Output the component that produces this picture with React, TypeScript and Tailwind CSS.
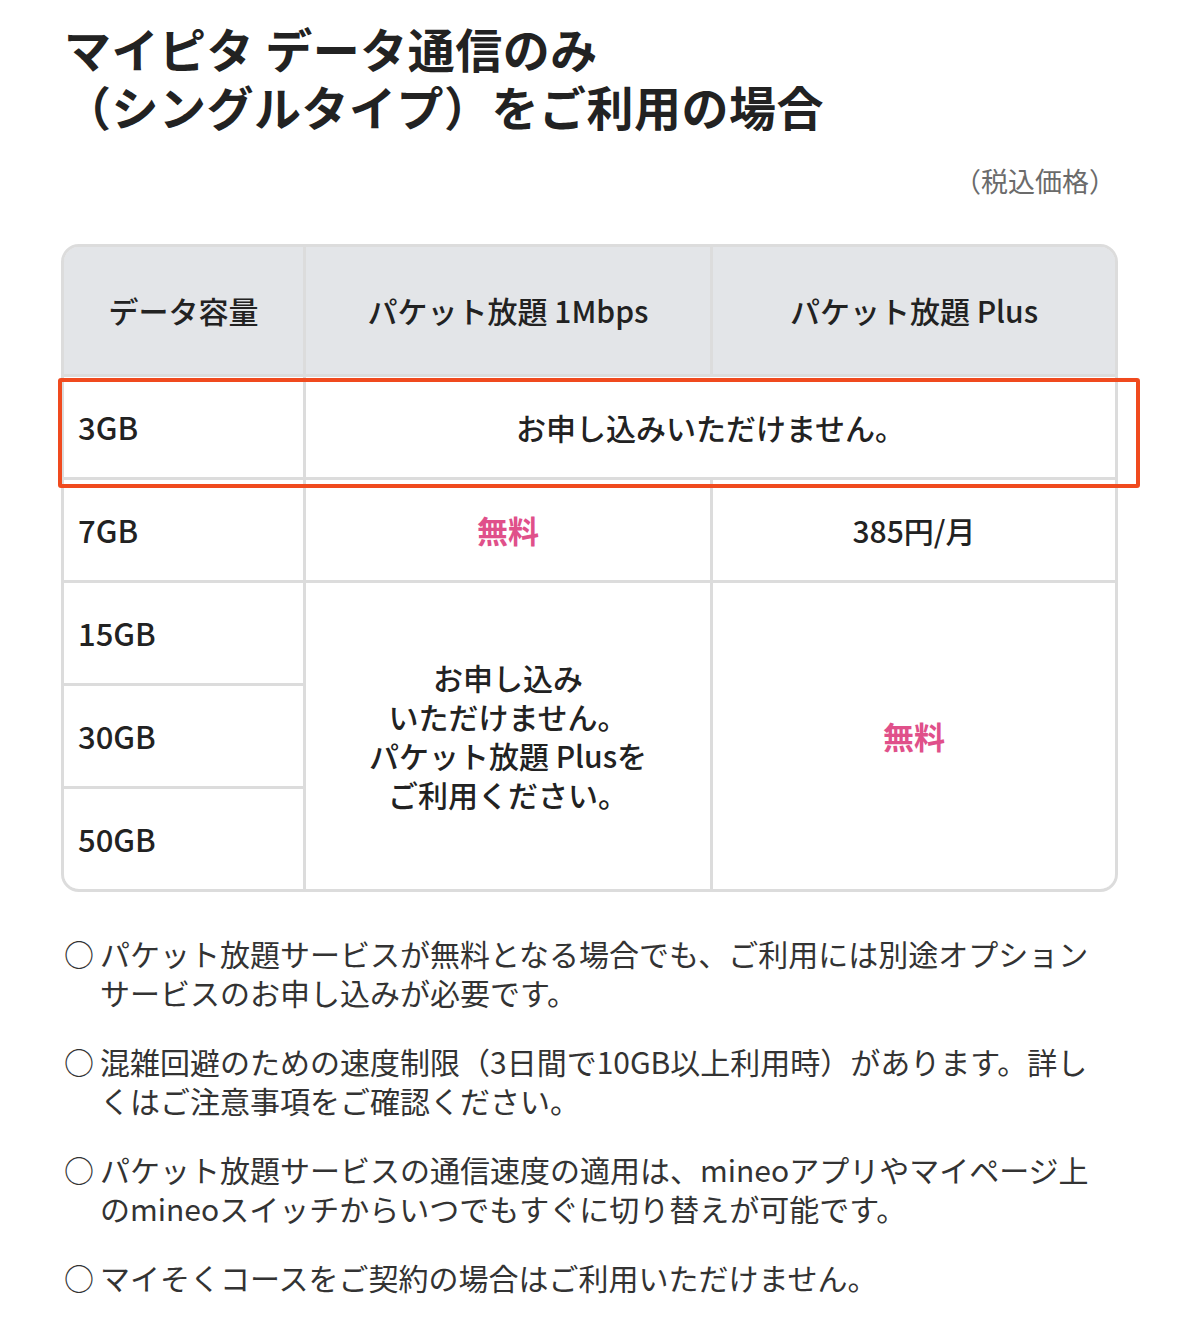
import React from 'react';

const jp = { fontFamily: '"Noto Sans CJK JP", "Noto Sans", sans-serif' };

const notes: React.ReactNode[] = [
  <>パケット放題サービスが無料となる場合でも、ご利用には別途オプション<br />サービスのお申し込みが必要です。</>,
  <>混雑回避のための速度制限（3日間で10GB以上利用時）があります。詳し<br />くはご注意事項をご確認ください。</>,
  <>パケット放題サービスの通信速度の適用は、mineoアプリやマイページ上<br />のmineoスイッチからいつでもすぐに切り替えが可能です。</>,
  <>マイそくコースをご契約の場合はご利用いただけません。</>,
];

const Free = () => (
  <span className="text-[#e0508a] font-bold text-[31px]">無料</span>
);

const App: React.FC = () => {
  const head = 'bg-[#e3e5e8] flex items-center justify-center font-medium text-[30px] text-[#222]';
  const cap = 'bg-white flex items-center pl-[14px] font-medium text-[31px] text-[#222]';
  const val = 'bg-white flex items-center justify-center font-medium text-[30px] text-[#222]';

  return (
    <div className="w-[1179px] min-h-[1339px] bg-white px-[61px] pt-[19px]" style={jp}>
      <h1 className="pl-[3px] text-[47px] leading-[58px] font-bold text-[#222] tracking-[0.5px]">
        マイピタ データ通信のみ
        <br />
        （シングルタイプ）をご利用の場合
      </h1>

      <p className="mt-[28px] text-right text-[27px] leading-[36px] text-[#6b6b6b] pr-[2px]">（税込価格）</p>

      <div className="relative mt-[45px]">
        <div className="border-[3px] border-[#dcdcdc] rounded-[18px] overflow-hidden">
          <div className="grid grid-cols-[239px_404px_1fr] grid-rows-[127px_repeat(5,100px)] gap-[3px] bg-[#dcdcdc]">
            <div className={head}>データ容量</div>
            <div className={head}>パケット放題 1Mbps</div>
            <div className={head}>パケット放題 Plus</div>

            <div className={cap}>3GB</div>
            <div className={`${val} col-span-2`}>お申し込みいただけません。</div>

            <div className={cap}>7GB</div>
            <div className={val}><Free /></div>
            <div className={val}>385円/月</div>

            <div className={cap}>15GB</div>
            <div className={`${val} row-span-3 text-center leading-[39px]`}>
              お申し込み
              <br />
              いただけません。
              <br />
              パケット放題 Plusを
              <br />
              ご利用ください。
            </div>
            <div className={`${val} row-span-3`}><Free /></div>
            <div className={cap}>30GB</div>
            <div className={cap}>50GB</div>
          </div>
        </div>

        {/* hand-drawn highlight over the 3GB row */}
        <div className="absolute left-[-3px] top-[134px] w-[1082px] h-[110px] border-[4px] border-[#f04a1e] rounded-[3px] pointer-events-none" />
      </div>

      <ul className="mt-[42px] pl-[3px] flex flex-col gap-[30px] text-[30px] leading-[39px] text-[#333]">
        {notes.map((n, i) => (
          <li key={i} className="flex gap-[8px] whitespace-nowrap">
            <span className="shrink-0 w-[28px]">○</span>
            <span>{n}</span>
          </li>
        ))}
      </ul>
    </div>
  );
};

export default App;
